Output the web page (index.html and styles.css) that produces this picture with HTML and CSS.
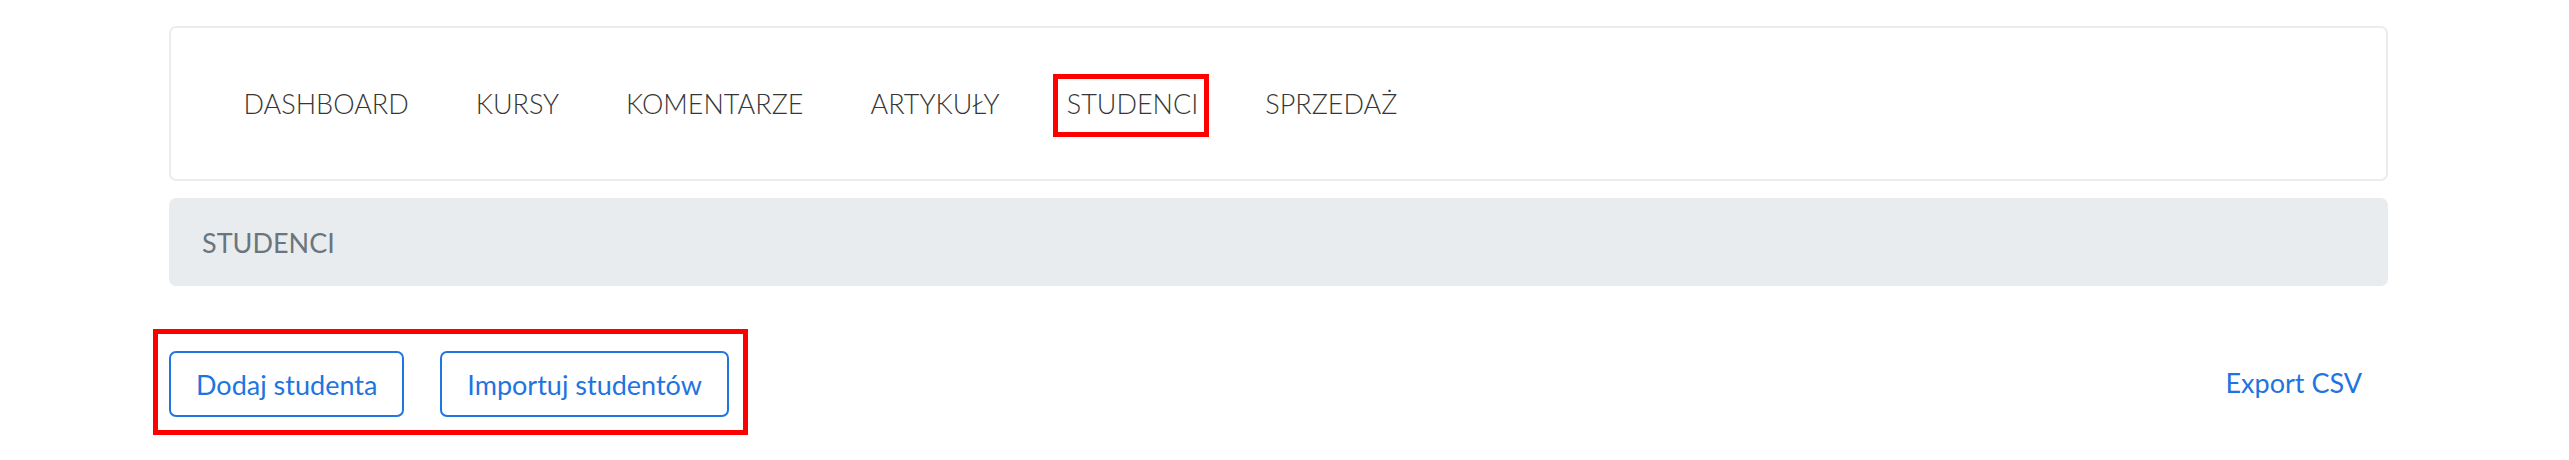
FILE: index.html
```html
<!DOCTYPE html>
<html lang="pl">
<head>
<meta charset="utf-8">
<title>Studenci</title>
<link rel="stylesheet" href="styles.css">
</head>
<body>
<div class="page">
  <nav class="navcard">
    <ul class="nav">
      <li><a class="nav-link" href="#">DASHBOARD</a></li>
      <li><a class="nav-link" href="#">KURSY</a></li>
      <li><a class="nav-link" href="#">KOMENTARZE</a></li>
      <li><a class="nav-link" href="#">ARTYKUŁY</a></li>
      <li><a class="nav-link nav-link--marked" href="#">STUDENCI</a></li>
      <li><a class="nav-link" href="#">SPRZEDAŻ</a></li>
    </ul>
  </nav>
  <div class="breadcrumb">STUDENCI</div>
  <div class="actions">
    <div class="btn-group-marked">
      <a class="btn btn-outline" href="#">Dodaj studenta</a>
      <a class="btn btn-outline" href="#">Importuj studentów</a>
    </div>
    <a class="btn btn-link" href="#">Export CSV</a>
  </div>
</div>
</body>
</html>
```

FILE: styles.css
```css
html, body {
  margin: 0;
  padding: 0;
  background: #ffffff;
}

body {
  font-family: Lato, "Open Sans", "Liberation Sans", sans-serif;
}

.page {
  width: 2219px;
  margin-left: 169px;
  padding-top: 26px;
}

.navcard {
  box-sizing: border-box;
  height: 155px;
  border: 2px solid #ececec;
  border-radius: 7px;
  display: flex;
  align-items: center;
  padding-left: 39px;
}

.nav {
  list-style: none;
  margin: 0;
  padding: 0;
  display: flex;
  align-items: center;
}

.nav-link {
  position: relative;
  display: block;
  padding: 0 33.5px;
  font-size: 27px;
  font-weight: 300;
  color: #363636;
  text-decoration: none;
  line-height: 34px;
}

.nav-link--marked::after {
  content: "";
  position: absolute;
  left: 20px;
  right: 23px;
  top: -13px;
  height: 63px;
  box-sizing: border-box;
  border: 5px solid #f00;
}

.breadcrumb {
  box-sizing: border-box;
  margin-top: 17px;
  height: 88px;
  background: #e9ecef;
  border-radius: 7px;
  padding-left: 33px;
  display: flex;
  align-items: center;
  font-size: 27px;
  color: #6c757d;
}

.actions {
  margin-top: 43px;
  display: flex;
  align-items: center;
  justify-content: space-between;
}

.btn-group-marked {
  display: flex;
  gap: 36px;
  margin-left: -16px;
  padding: 17px 14px 13px 11px;
  border: 5px solid #f00;
}

.btn {
  box-sizing: border-box;
  display: inline-flex;
  align-items: center;
  height: 66px;
  padding: 0 25px;
  font-size: 27px;
  color: #1f74e0;
  text-decoration: none;
  border-radius: 7px;
}

.btn-outline {
  border: 2px solid #2076e0;
}

.btn-link {
  border: 2px solid transparent;
  padding-right: 24px;
}
```
